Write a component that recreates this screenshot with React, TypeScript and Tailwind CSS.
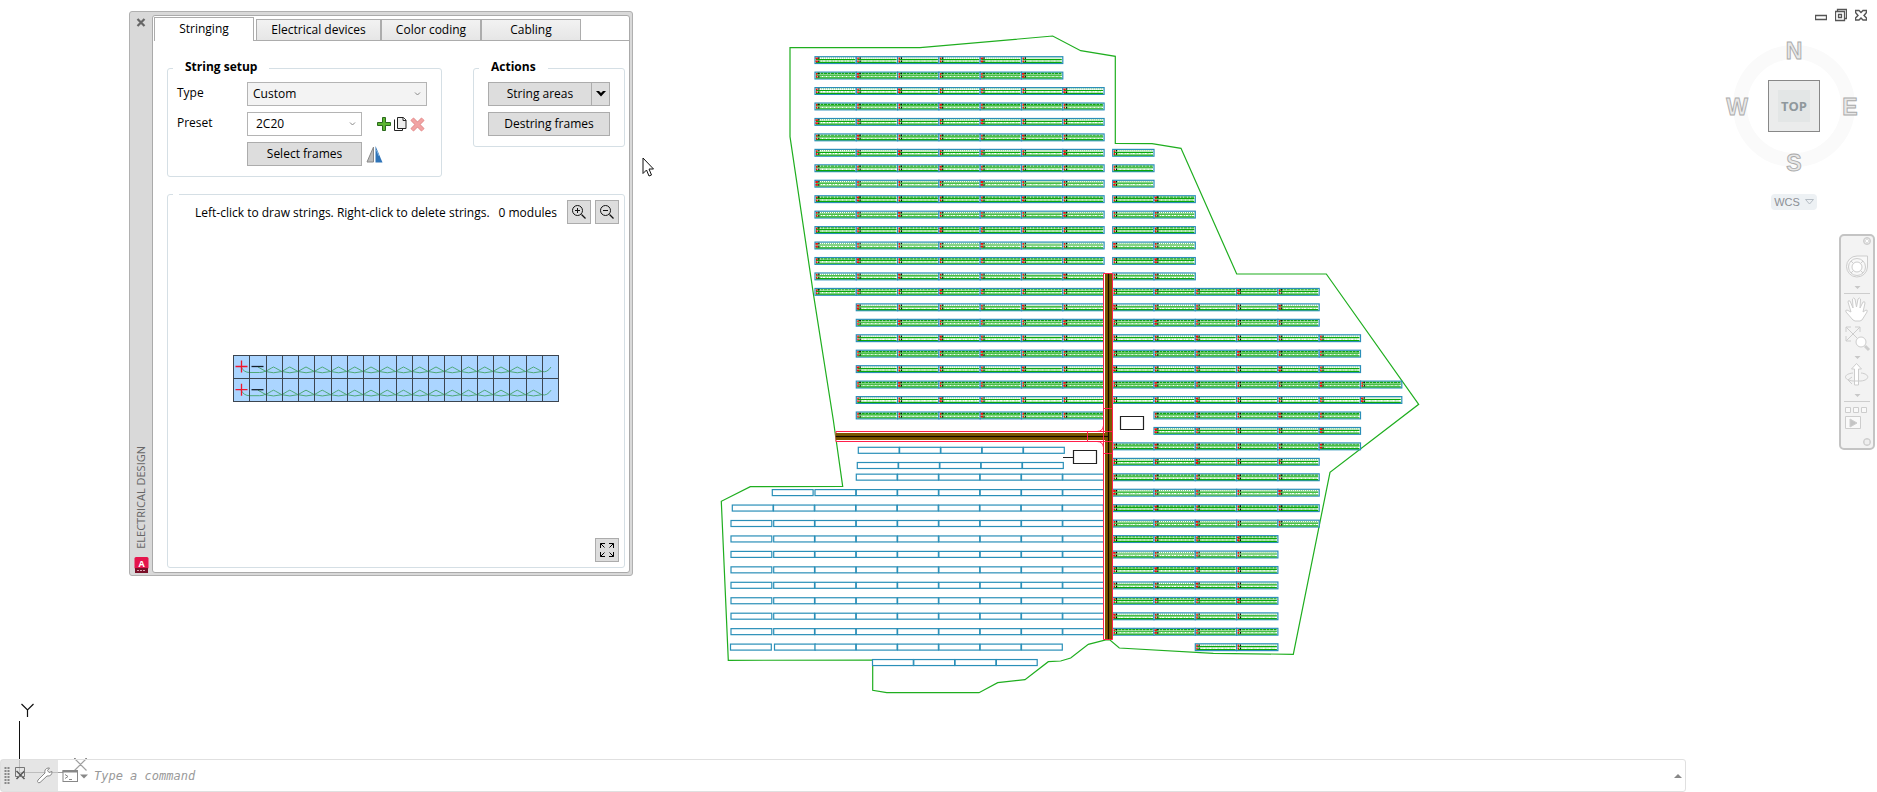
import type { ReactNode } from "react";

const UI = "font-['Open_Sans','Noto_Sans',sans-serif]";
const PITCH = 41.3;
const rowY = (row: number) => 60 + row * 15.45;

type Run = { x: number; row: number; count: number };

const range = (from: number, to: number) =>
  Array.from({ length: to - from + 1 }, (_, i) => from + i);

const runs = (x: number, from: number, to: number, count: number): Run[] =>
  range(from, to).map((row) => ({ x, row, count }));

const WEST = 815;
const EAST = 1112.7;

const strungRuns: Run[] = [
  ...runs(WEST, 0, 1, 6),
  ...runs(WEST, 2, 15, 7),
  ...runs(WEST + PITCH, 16, 23, 6),
  ...runs(EAST, 6, 8, 1),
  ...runs(EAST, 9, 14, 2),
  ...runs(EAST, 15, 17, 5),
  ...runs(EAST, 18, 20, 6),
  ...runs(EAST, 21, 22, 7),
  ...runs(EAST + PITCH, 23, 24, 5),
  ...runs(EAST, 25, 25, 6),
  ...runs(EAST, 26, 30, 5),
  ...runs(EAST, 31, 37, 4),
  ...runs(EAST + 2 * PITCH, 38, 38, 2),
];

const emptyRuns: { x: number; y: number; count: number }[] = [
  { x: 858.3, y: 450.3, count: 5 },
  { x: 857.3, y: 465.5, count: 5 },
  { x: 856.3, y: rowY(27), count: 6 },
  { x: 772.3, y: rowY(28), count: 1 },
  { x: WEST, y: rowY(28), count: 7 },
  { x: 732.3, y: rowY(29), count: 1 },
  { x: 773.5, y: rowY(29), count: 8 },
  ...range(30, 37).flatMap((row) => [
    { x: 731, y: rowY(row), count: 1 },
    { x: 773.7, y: rowY(row), count: 1 },
    { x: WEST, y: rowY(row), count: 7 },
  ]),
  { x: 730.5, y: rowY(38), count: 1 },
  { x: 774.5, y: rowY(38), count: 1 },
  { x: WEST, y: rowY(38), count: 6 },
  { x: 872.5, y: rowY(39), count: 4 },
];

const boundary =
  "790,47.5 920,47.7 1052.7,36 1080.7,50.7 1115.3,56.3 1115.3,143.3 1152,143.7 1181,148.3 1236.7,274 1326.3,274 1418.7,404.3 1330,472.3 1293.3,654.3 1213.3,653.3 1119.3,648 1110,640 1106.7,639.7 1088.3,644.3 1070.7,658 1060.7,661 1048.3,661.7 1025,679.7 997.7,682.7 979,692.7 886.7,692.7 872.7,690.3 872.7,660 728.3,660.3 721.3,501.3 750.3,486.7 842.7,486.3 833.3,420 813.3,293.3 790,136.7";

function StrungFrame({ x, y, row, col }: { x: number; y: number; row: number; col: number }) {
  const dense = row % 2 === 1;
  const bold = (row * 5 + col * 3) % 4 === 0;
  return (
    <g>
      <rect x={x} y={y - 3.3} width={PITCH} height={6.8} fill="#fff" stroke="#2a8fb8" strokeWidth="1.2" />
      <path d={`M${x + 2} ${y - 2}h${PITCH - 3}`} stroke="#12a612" strokeWidth={dense ? 1.2 : 0.6} strokeDasharray={dense ? "3 0.5" : "1 1"} />
      <path d={`M${x + 1} ${y - 0.4}h${PITCH - 2}`} stroke="#0aa80a" strokeWidth="1.2" />
      <path d={`M${x + 4} ${y + 1}h${PITCH - 6}`} stroke="#5fcf5f" strokeWidth="0.7" strokeDasharray={dense ? "3 1" : "2 1 1 2"} />
      <path d={`M${x + 1} ${y + 2.4}h${PITCH - 2}`} stroke="#0aa80a" strokeWidth="1.2" />
      <path d={`M${x + 1.7} ${y - 2.5}v1.8M${x + 1.7} ${y + 0.4}v1.8`} stroke="#f01010" strokeWidth={bold ? 2.4 : 1.5} />
      <path d={`M${x + 3.8} ${y - 2.7}v1.6M${x + 3.8} ${y + 0.4}v1.7`} stroke="#000" strokeWidth="1.1" />
    </g>
  );
}

function SiteDrawing() {
  return (
    <svg className="absolute inset-0 h-full w-full" aria-label="Site layout">
      <polygon points={boundary} fill="none" stroke="#1fae1f" strokeWidth="1.2" />
      {emptyRuns.flatMap((r, i) =>
        range(0, r.count - 1).map((k) => (
          <rect key={`${i}-${k}`} x={r.x + k * PITCH} y={r.y - 3} width={PITCH - 0.5} height={6} fill="#fff" stroke="#2a8fb8" strokeWidth="1.2" />
        )),
      )}
      {strungRuns.flatMap((r, i) =>
        range(0, r.count - 1).map((k) => (
          <StrungFrame key={`${i}-${k}`} x={r.x + k * PITCH} y={rowY(r.row)} row={r.row} col={k} />
        )),
      )}
      <g fill="none">
        <path d="M836 431.5h272v10H836z" fill="#fff" stroke="#ff1f4b" />
        <path d="M1103.500 273.500h9v366h-9z" fill="#fff" stroke="#ff1f4b" />
        <path d="M836 433h272v7H836z" fill="#7a5700" />
        <path d="M1105 274h7v365h-7z" fill="#7a5700" />
        <path d="M836 436h272v1H836zM1108 274h1v365h-1z" fill="#120c00" stroke="#120c00" strokeOpacity="0.2" />
        <path d="M1087.5 431.5v10h25v-10zM1103.5 408.5h9v45h-9zM1097 431.5q6 0 6.500-6M1097 441.500q6 0 6.500 6" stroke="#ff1f4b" />
        <path d="M1120.500 416.500h23v13h-23zM1073.500 450.500h23v13h-23zM1063 457.500h10" stroke="#222" strokeWidth="1.200" />
      </g>
      <path d="M19.500 721v51.500H63M15.500 767.500h9v9h-9z" fill="none" stroke="#111" />
      <path d="M21.500 704l6 6 6-6M27.500 710v7M74.500 758.500l12 12M86.500 758.500l-12 12" fill="none" stroke="#111" strokeWidth="1.200" />
    </svg>
  );
}

const btn =
  "flex h-6 items-center justify-center border border-[#acacac] bg-[#dddddd] text-black";

function Field({ id, label, children }: { id: string; label: string; children: ReactNode }) {
  return (
    <div className="flex h-6 items-center">
      <label htmlFor={id} className="w-[70px] pb-[3px]">
        {label}
      </label>
      {children}
    </div>
  );
}

function Select({ id, value, className }: { id: string; value: string; className: string }) {
  return (
    <div className="relative">
      <select id={id} className={`h-6 appearance-none border border-[#b4b4b4] outline-none ${className}`}>
        <option>{value}</option>
      </select>
      <svg className="pointer-events-none absolute top-[9px] right-[6px]" width="7" height="6" fill="none" stroke="#888">
        <path d="M1 1.500l2.500 2.500L6 1.500" />
      </svg>
    </div>
  );
}

function StringPreview() {
  const cell = 16.25;
  const centers = range(2, 18).map((c) => c * cell);
  return (
    <svg width="327" height="48" aria-label="String preview">
      <rect width="326" height="46.500" fill="#abd5ff" />
      {[0, 23.2].map((y) => (
        <g key={y} fill="none">
          <path
            d={`M8 ${y + 12}q3 5.500 8.500 5.500h10q4 0 6-1.500M25 ${y + 12}l8 4.500 ${centers
              .map((c) => `M${c} ${y + 16.5}l6-3.500q2-2 4 0l6.300 3.500M${c} ${y + 16.5}q8 2.500 16.300 0`)
              .join(" ")}M309 ${y + 16.5}q5 1.500 9-4.500`}
            stroke="#4fa878"
          />
          <path d={`M2.500 ${y + 11.5}h12M8.500 ${y + 5.500}v12`} stroke="#f0142c" strokeWidth="1.300" />
          <path d={`M18.500 ${y + 11.500}h12`} stroke="#16202c" strokeWidth="1.300" />
        </g>
      ))}
      <path
        d={`M0 .5h326M0 23.500h326M0 46.500h326${range(0, 20).map((c) => `M${Math.round(c * cell)}.500 0v47`).join("")}`}
        stroke="#3c4550"
        fill="none"
      />
    </svg>
  );
}

function Magnifier({ plus }: { plus?: boolean }) {
  return (
    <svg width="16" height="16" fill="none" stroke="#111" aria-hidden="true">
      <circle cx="6.500" cy="6.500" r="5" />
      <path d={plus ? "M4 6.500h5M6.500 4v5" : "M4 6.500h5"} />
      <path d="M10.500 10.500l4 4" strokeWidth="1.300" />
    </svg>
  );
}

const tabs = [
  { name: "Electrical devices", width: "w-[125px]" },
  { name: "Color coding", width: "w-[100px]" },
  { name: "Cabling", width: "w-[100px]" },
];

function Palette() {
  return (
    <section className={`absolute top-[11px] left-[129px] flex h-[565px] w-[504px] rounded-[3px] border border-[#b0b0b0] bg-[#d9d9d9] pt-[3px] pr-[2px] pb-[2px] text-[12px] leading-[16px] text-black ${UI}`}>
      <div className="flex w-[22px] flex-col items-center justify-between">
        <button aria-label="Close" className="mt-[3px]">
          <svg width="10" height="9" stroke="#666" strokeWidth="2.200">
            <path d="M1.500 1l7 7M8.500 1l-7 7" />
          </svg>
        </button>
        <div className="flex flex-col items-center gap-2">
          <h1 className="rotate-180 text-[11px] leading-[18px] text-[#666] [writing-mode:vertical-rl]">ELECTRICAL DESIGN</h1>
          <svg width="15" height="16" aria-hidden="true">
            <rect x="0.500" width="14" height="12" rx="1.500" fill="#e5154c" />
            <rect x="1" y="11" width="13" height="5" fill="#7a1028" />
            <path d="M3 13.500h9" stroke="#d9a0b0" strokeDasharray="2 1" />
            <text x="7.500" y="9.500" textAnchor="middle" fontSize="9" fontWeight="700" fill="#fff">A</text>
          </svg>
        </div>
      </div>
      <div className="flex min-w-0 flex-1 flex-col rounded-[3px] border border-[#aaa] bg-white pt-[1px] pl-[1px]">
        <div role="tablist" className="flex items-end border-b border-[#acacac] pr-1">
          <button role="tab" aria-selected="true" className="-mb-px mr-[2px] h-[24px] w-[100px] border border-b-0 border-[#acacac] bg-white pb-px">
            Stringing
          </button>
          {tabs.map((t) => (
            <button key={t.name} role="tab" aria-selected="false" className={`h-[21px] border border-b-0 border-[#acacac] bg-linear-to-b from-[#f2f2f2] to-[#e6e6e6] ${t.width}`}>
              {t.name}
            </button>
          ))}
        </div>
        <div className="flex flex-1 flex-col pt-[18px] pr-[4px] pb-[4px] pl-[13px]">
          <div className="flex items-start justify-between">
            <fieldset className="w-[275px] rounded-[3px] border border-[#d5dfe5] pb-[10px]">
              <legend className="ml-[5px] h-[18px] px-3 font-bold">String setup</legend>
              <div className="flex flex-col gap-[6px] pt-[5px] pl-[9px]">
                <Field id="type" label="Type">
                  <Select id="type" value="Custom" className="w-[180px] bg-[#f3f3f3] px-[5px]" />
                </Field>
                <Field id="preset" label="Preset">
                  <Select id="preset" value="2C20" className="w-[115px] bg-white px-2" />
                  <div className="ml-[15px] flex items-center gap-[3px]">
                    <button aria-label="Add preset">
                      <svg width="14" height="14">
                        <path d="M5.500 .5h3v5h5v3h-5v5h-3v-5h-5v-3h5z" fill="#5cb531" stroke="#2a6a1c" />
                      </svg>
                    </button>
                    <button aria-label="Copy preset">
                      <svg width="13" height="14" fill="#fff" stroke="#222">
                        <path d="M.5 2.500v11h8v-2" />
                        <path d="M3.500 .5h6l2.500 2.500v8.500H3.500z" fill="#eee" />
                        <path d="M9 .5v3h3" />
                      </svg>
                    </button>
                    <button aria-label="Delete preset">
                      <svg width="15" height="15">
                        <path d="M2 2l11 11M13 2L2 13" stroke="#e08f8f" strokeWidth="4.500" />
                        <path d="M2 2l11 11M13 2L2 13" stroke="#f2a3a3" strokeWidth="3" />
                      </svg>
                    </button>
                  </div>
                </Field>
                <div className="flex items-center pl-[70px]">
                  <button className={`${btn} w-[115px]`}>Select frames</button>
                  <button aria-label="Mirror" className="ml-1">
                    <svg width="18" height="17">
                      <path d="M7.500 1v15H1z" fill="#bbb" stroke="#888" />
                      <path d="M9.500 0l7 16.500h-7z" fill="#2f74b8" />
                      <path d="M10.500 4l2.500 6" stroke="#7fb2e0" />
                    </svg>
                  </button>
                </div>
              </div>
            </fieldset>
            <fieldset className="w-[152px] rounded-[3px] border border-[#d5dfe5] pb-[10px]">
              <legend className="ml-[5px] h-[18px] px-3 font-bold">Actions</legend>
              <div className="flex flex-col gap-[6px] pt-[5px] pl-[14px]">
                <div className="flex">
                  <button className={`${btn} w-[104px]`}>String areas</button>
                  <button aria-label="More string actions" className={`${btn} w-[18px] border-l-0`}>
                    <svg width="10" height="6">
                      <path d="M0 0h3l2 2 2-2h3L5 5.500z" />
                    </svg>
                  </button>
                </div>
                <button className={`${btn} w-[122px]`}>Destring frames</button>
              </div>
            </fieldset>
          </div>
          <fieldset className="mt-[17px] flex flex-1 flex-col rounded-[3px] border border-[#d5dfe5] pr-[5px] pb-[5px]">
            <legend className="ml-[5px] h-px w-[6px]" />
            <div className="flex items-center gap-1 pt-[5px] pl-[27px]">
              <p className="flex-1 pt-[2px] whitespace-nowrap">Left-click to draw strings. Right-click to delete strings.</p>
              <p className="mr-[6px] pt-[2px] whitespace-nowrap">0 modules</p>
              <button aria-label="Zoom in" className={`${btn} w-6`}><Magnifier plus /></button>
              <button aria-label="Zoom out" className={`${btn} w-6`}><Magnifier /></button>
            </div>
            <div className="flex flex-1 items-center justify-center pb-1 pl-[5px]">
              <StringPreview />
            </div>
            <button aria-label="Fit to view" className={`${btn} w-6 self-end`}>
              <svg width="14" height="14" fill="none" stroke="#000">
                <path d="M.5 5V.5H5M.5.500l4 4M9 .5h4.500V5M13.500.500l-4 4M.5 9v4.500H5M.5 13.500l4-4M9 13.500h4.500V9M13.500 13.500l-4-4" />
              </svg>
            </button>
          </fieldset>
        </div>
      </div>
    </section>
  );
}

function WindowControls() {
  return (
    <div className="absolute top-[8px] right-[10px] flex items-center gap-[8px]">
      <button aria-label="Minimize">
        <svg width="12" height="14" fill="#fff" stroke="#555" strokeWidth="1.300"><path d="M.5 7.500h11v4H.5z" /></svg>
      </button>
      <button aria-label="Restore">
        <svg width="12" height="14" fill="#fff" stroke="#555" strokeWidth="1.300">
          <path d="M2.500 1.500h9v9h-9z" />
          <path d="M.5 3.500h9v9h-9z" />
          <path d="M3.500 6.500h3v3h-3z" />
        </svg>
      </button>
      <button aria-label="Close drawing">
        <svg width="12" height="14" fill="#fff" stroke="#555" strokeWidth="1.400">
          <path d="M.5 2.500h3.500l2 2 2-2h3.500v2L9 7.500l2.500 2.500v2H8l-2-2-2 2H.5v-2L3 7.500.5 4.500z" />
        </svg>
      </button>
    </div>
  );
}

function ViewCube() {
  return (
    <div className="absolute top-[38px] right-[9px] flex w-[148px] flex-col items-center">
      <svg width="148" height="140" className="font-['Liberation_Sans',sans-serif]" aria-label="View cube">
        <circle cx="74" cy="68" r="54" fill="none" stroke="#fafafa" strokeWidth="14" />
        <g fill="#e8e8e8" stroke="#aaa" strokeWidth="0.900" fontSize="23" fontWeight="700" textAnchor="middle">
          <text x="74" y="21">N</text>
          <text x="74" y="133">S</text>
          <text x="17" y="77">W</text>
          <text x="130" y="77">E</text>
        </g>
        <rect x="48.500" y="42.500" width="51" height="51" fill="#ebecec" stroke="#888" />
        <rect x="58" y="52" width="32" height="32" fill="#e3e6e6" />
        <text x="74" y="73" textAnchor="middle" fontSize="13" fontWeight="700" fill="#8f989c" className="font-['Open_Sans',sans-serif]">TOP</text>
      </svg>
      <button className="mt-4 flex h-4 items-center gap-[5px] rounded-[4px] bg-[#edf1f4] px-[3px] font-['Liberation_Sans',sans-serif] text-[11px] leading-4 text-[#8b8f94]">
        WCS
        <svg width="9" height="6" fill="none" stroke="#b4bcc4"><path d="M.5.500h8l-4 4.500z" /></svg>
      </button>
    </div>
  );
}

function NavBar() {
  return (
    <nav aria-label="Navigation" className="absolute top-[234px] right-[2px] rounded-[5px] border-2 border-[#c4c4c4] bg-[#f3f3f3]">
      <svg width="32" height="212" fill="none" stroke="#cdcdcd">
        <circle cx="26" cy="5" r="3.500" fill="#ddd" />
        <path d="M24.500 3.500l3 3M27.500 3.500l-3 3" stroke="#fff" />
        <path d="M16 20h10.500v11a10.500 10.500 0 1 1-10.500-11z" fill="#f8f8f8" />
        <circle cx="16" cy="31" r="8.500" />
        <circle cx="16" cy="31" r="5" fill="#fff" />
        <path d="M10 25l2.500 2.500M22 25l-2.500 2.500M10 37l2.500-2.500M22 37l-2.500-2.500" />
        <path d="M13.500 50h6l-3 3zM13.500 120h6l-3 3zM13.500 158h6l-3 3z" fill="#c8c8c8" stroke="none" />
        <path d="M3 57.500h26M3 165.500h26" />
        <path d="M12 84l-7-8q-1-2 1-2l4 2-3-10q0-2 2-1l3 7-.5-9q1-2 2.500 0l1.500 8 1.500-8q1.500-2 2.500 0l-.5 9 3-6q2-1 2 1l-2 9 3-2q2 0 1 2l-5 8-2 1h-5z" fill="#fff" />
        <path d="M5 91l14 14M19 91L5 105M5 96v-5h5M14 91h5v5M5 100v5h5" />
        <circle cx="20" cy="106" r="5" fill="#fff" />
        <path d="M24 110l4 4" strokeWidth="3" />
        <path d="M13.500 149v-16h-3l5-5.500 5 5.500h-3v16z" fill="#fff" />
        <path d="M12 137c-10 1-10 7 0 8h8c9-1 9-7 0-8M11 141l-4 3 4 4" />
        <path d="M4.500 171.500h5v5h-5zM12.500 171.500h5v5h-5zM20.500 171.500h5v5h-5zM4.500 180.500h15v12h-15z" fill="#f9f9f9" />
        <path d="M9 183l7 4-7 4z" fill="#c4c4c4" />
        <circle cx="26" cy="206" r="3.500" fill="#ddd" />
        <path d="M24 205h4M24 207h4" stroke="#fff" />
      </svg>
    </nav>
  );
}

function CommandLine() {
  return (
    <div className="relative mr-[191px] flex h-[33px] items-stretch rounded-[3px] border border-[#e0e0e0] bg-white/60">
      <div className="flex w-[57px] items-center bg-[#d4d4d4]/60">
        <svg width="56" height="31" fill="none" aria-hidden="true">
          <path d="M4.500 7v18M7.500 7v18" stroke="#888" strokeWidth="2" strokeDasharray="2 1" />
          <path d="M15.500 11l8 8M23.500 11l-8 8" stroke="#555" strokeWidth="1.500" />
          <path d="M14.500 7.500h9v9h-9z" stroke="#777" />
          <path d="M37 20l7-7q-1-4 3-5l1.500 0-2 2.500 1.500 2 3-1q0 5-5 4.500l-7 6.500q-2 1-2.500-1z" fill="#fff" stroke="#888" />
        </svg>
      </div>
      <label htmlFor="command" className="flex items-center pl-1">
        <svg width="28" height="16" fill="none" stroke="#888" aria-label="Command">
          <rect x="1" y="2.500" width="14.500" height="11" fill="#fff" />
          <path d="M.5 3.500h15.500" strokeWidth="2" />
          <path d="M3 6.500l3 2-3 2M7 11.500h3" />
          <path d="M18 6.500h8l-4 4z" fill="#888" stroke="none" />
        </svg>
      </label>
      <input id="command" placeholder="Type a command" className="min-w-0 flex-1 bg-transparent pl-1 font-['DejaVu_Sans_Mono',monospace] text-[12px] italic outline-none placeholder:text-[#999]" />
      <button aria-label="Command history" className="px-[3px]">
        <svg width="8" height="4"><path d="M0 4h8L4 0z" fill="#888" /></svg>
      </button>
    </div>
  );
}

export default function App() {
  return (
    <main className="relative flex min-h-screen flex-col justify-end overflow-hidden bg-white">
      <SiteDrawing />
      <Palette />
      <svg className="absolute top-[157px] left-[642px]" width="13" height="21" aria-hidden="true">
        <path d="M1 1v15.500l3.500-3.500 2.500 6 2.500-1-2.500-6h4.500z" fill="#fff" stroke="#111" />
      </svg>
      <WindowControls />
      <ViewCube />
      <NavBar />
      <CommandLine />
    </main>
  );
}
